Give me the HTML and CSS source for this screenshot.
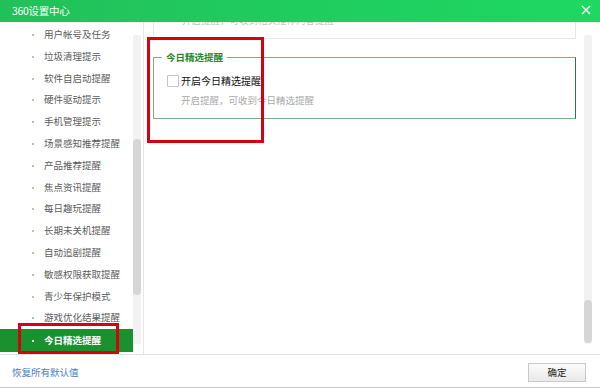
FILE: index.html
```html
<!DOCTYPE html>
<html lang="zh-CN">
<head>
<meta charset="utf-8">
<link rel="stylesheet" href="styles.css">
</head>
<body>
<div class="window">
  <div class="titlebar">
    <span class="title">360设置中心</span>
    <svg class="close" width="10" height="10" viewBox="0 0 10 10"><path d="M1 1L9 9M9 1L1 9" stroke="#fff" stroke-width="1.4"/></svg>
  </div>
  <div class="main">
    <div class="sidebar">
      <ul class="menu">
        <li>用户帐号及任务</li>
        <li>垃圾清理提示</li>
        <li>软件自启动提醒</li>
        <li>硬件驱动提示</li>
        <li>手机管理提示</li>
        <li>场景感知推荐提醒</li>
        <li>产品推荐提醒</li>
        <li>焦点资讯提醒</li>
        <li>每日趣玩提醒</li>
        <li>长期未关机提醒</li>
        <li>自动追剧提醒</li>
        <li>敏感权限获取提醒</li>
        <li>青少年保护模式</li>
        <li>游戏优化结果提醒</li>
        <li class="active">今日精选提醒</li>
      </ul>
      <div class="scroll left-scroll"><div class="thumb"></div></div>
    </div>
    <div class="content">
      <div class="panel">
        <div class="prevbox"><span class="prevtext">开启提醒，可收到相关推荐内容提醒</span></div>
        <div class="group">
          <div class="legend">今日精选提醒</div>
          <label class="check"><span class="box"></span>开启今日精选提醒</label>
          <div class="desc">开启提醒，可收到今日精选提醒</div>
        </div>
      </div>
      <div class="scroll right-scroll"><div class="thumb"></div></div>
    </div>
  </div>
  <div class="footer">
    <a class="reset">恢复所有默认值</a>
    <button class="ok">确定</button>
  </div>
  <div class="mark mark-content"></div>
  <div class="mark mark-menu"></div>
</div>
</body>
</html>
```
FILE: styles.css
```css
* { box-sizing: border-box; }
html, body { margin: 0; padding: 0; }
body {
  width: 600px;
  height: 388px;
  overflow: hidden;
  font-family: "Noto Sans CJK SC", "Microsoft YaHei", sans-serif;
  font-size: 9.5px;
  background: #fff;
}
.window {
  position: relative;
  width: 600px;
  height: 388px;
  display: flex;
  flex-direction: column;
  border-bottom: 1px solid #c8c8c8;
}
.titlebar {
  height: 22px;
  flex: none;
  display: flex;
  align-items: center;
  justify-content: space-between;
  padding: 0 9px 0 12px;
  background: linear-gradient(90deg, #22c05a 0%, #1fcf5f 60%, #1ed862 100%);
  color: #fff;
}
.title { font-size: 10.5px; line-height: 22px; letter-spacing: -0.3px; }
.close { display: block; margin-top: -2px; }
.main {
  flex: 1;
  display: flex;
  min-height: 0;
  border-bottom: 1px solid #e3e3e3;
}
.sidebar {
  width: 144px;
  flex: none;
  display: flex;
  border-right: 1px solid #e6e6e6;
  overflow: hidden;
}
.menu {
  list-style: none;
  margin: 0;
  padding: 2px 0 0 0;
  width: 133px;
  flex: none;
}
.menu li {
  height: 21.8px;
  line-height: 21.8px;
  padding-left: 44px;
  position: relative;
  color: #5c5c5c;
  white-space: nowrap;
}
.menu li::before {
  content: "";
  position: absolute;
  left: 32px;
  top: 10px;
  width: 2px;
  height: 2px;
  background: #bdbdbd;
}
.menu li.active {
  background: #1b902f;
  color: #fff;
  font-weight: bold;
  height: 23px;
  line-height: 23px;
  margin-top: -0.6px;
}
.menu li.active::before { background: #cfe8d2; top: 11px; }
.scroll {
  width: 8px;
  background: #f2f2f2;
  border-radius: 2px;
  position: relative;
}
.left-scroll {
  margin: 13px 0 10px 0;
  flex: none;
}
.left-scroll .thumb {
  position: absolute;
  left: 0;
  right: 0;
  top: 104px;
  height: 156px;
  background: #d6d6d6;
  border-radius: 4px;
}
.content {
  flex: 1;
  display: flex;
  min-width: 0;
  padding-right: 8px;
}
.panel {
  flex: 1;
  padding: 0 8px 0 9px;
  overflow: hidden;
}
.prevbox {
  height: 17px;
  border: 1px solid #e8e8e8;
  border-top: none;
  overflow: hidden;
  position: relative;
}
.prevtext {
  display: block;
  margin-top: -9px;
  padding-left: 28px;
  color: #c4c4c4;
  line-height: 14px;
}
.group {
  position: relative;
  margin: 18px 0 0 0;
  padding: 15px 0 11px 13px;
  border: 1px solid #79b184;
  border-right-color: #2a7a38;
}
.legend {
  position: absolute;
  top: -8px;
  left: 8px;
  padding: 0 4px;
  background: #fff;
  color: #2a8a2a;
  font-weight: bold;
  font-size: 9.5px;
  line-height: 14px;
}
.check {
  display: flex;
  align-items: center;
  color: #111;
  line-height: 16px;
  font-size: 10px;
}
.box {
  width: 12px;
  height: 12px;
  border: 1px solid #c4c4c4;
  background: #fff;
  margin-right: 2px;
  border-radius: 1px;
}
.desc {
  color: #aaa;
  padding-left: 14px;
  margin-top: 4px;
  line-height: 14px;
}
.right-scroll {
  margin: 13px 0 10px 0;
  flex: none;
}
.right-scroll .thumb {
  position: absolute;
  left: 0;
  right: 0;
  top: 265px;
  height: 43px;
  background: #d6d6d6;
  border-radius: 4px;
}
.footer {
  height: 32px;
  flex: none;
  display: flex;
  align-items: center;
  justify-content: space-between;
  padding: 2px 14px 0 12px;
}
.reset {
  color: #3f82c4;
  cursor: pointer;
}
.ok {
  width: 58px;
  height: 19px;
  padding: 0;
  border: 1px solid #c9c9c9;
  background: linear-gradient(#fbfbfb, #e9e9e9);
  font-family: inherit;
  font-size: 9.5px;
  color: #222;
  line-height: 17px;
}
.mark {
  position: absolute;
  border: 3px solid #d7000f;
  pointer-events: none;
}
.mark-content { left: 147px; top: 37px; width: 117px; height: 106px; }
.mark-menu { left: 18px; top: 323px; width: 101px; height: 31px; }
```
